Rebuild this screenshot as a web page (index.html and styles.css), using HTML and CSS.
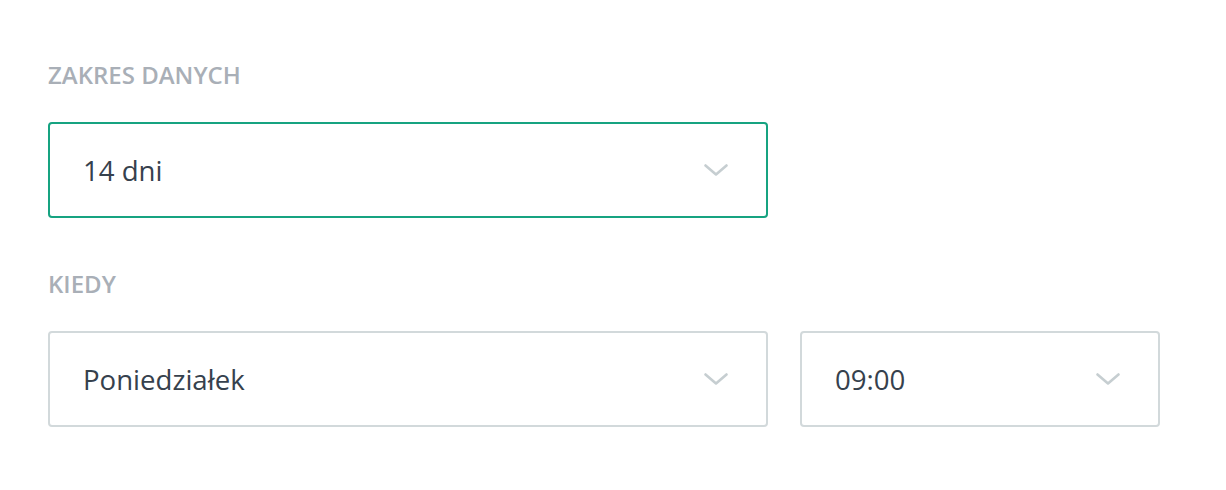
FILE: index.html
```html
<!DOCTYPE html>
<html lang="pl">
<head>
<meta charset="utf-8">
<link rel="stylesheet" href="styles.css">
</head>
<body>
<div class="form">
  <div class="field">
    <div class="label">Zakres danych</div>
    <div class="row">
      <div class="select wide active">
        <span class="value">14 dni</span>
        <svg class="chev" viewBox="0 0 24 12" width="24" height="12"><path d="M1.5 1.5 L12 10.5 L22.5 1.5" fill="none" stroke="#c6ced1" stroke-width="2.6" stroke-linecap="round" stroke-linejoin="round"/></svg>
      </div>
    </div>
  </div>
  <div class="field">
    <div class="label">Kiedy</div>
    <div class="row">
      <div class="select wide">
        <span class="value">Poniedziałek</span>
        <svg class="chev" viewBox="0 0 24 12" width="24" height="12"><path d="M1.5 1.5 L12 10.5 L22.5 1.5" fill="none" stroke="#c6ced1" stroke-width="2.6" stroke-linecap="round" stroke-linejoin="round"/></svg>
      </div>
      <div class="select narrow">
        <span class="value">09:00</span>
        <svg class="chev" viewBox="0 0 24 12" width="24" height="12"><path d="M1.5 1.5 L12 10.5 L22.5 1.5" fill="none" stroke="#c6ced1" stroke-width="2.6" stroke-linecap="round" stroke-linejoin="round"/></svg>
      </div>
    </div>
  </div>
</div>
</body>
</html>
```

FILE: styles.css
```css
html, body {
  margin: 0;
  padding: 0;
  background: #ffffff;
}
body {
  font-family: "Open Sans", "Noto Sans", sans-serif;
  color: #36414d;
}
.form {
  display: flex;
  flex-direction: column;
  gap: 51px;
  padding: 60px 0 0 48px;
}
.field {
  display: flex;
  flex-direction: column;
  gap: 32px;
}
.label {
  text-transform: uppercase;
  font-weight: 600;
  font-size: 24px;
  line-height: 30px;
  color: #a9afb7;
}
.row {
  display: flex;
  gap: 32px;
}
.select {
  box-sizing: border-box;
  height: 96px;
  border: 2px solid #d2d9db;
  border-radius: 4px;
  display: flex;
  align-items: center;
  justify-content: space-between;
  padding: 0 38px 0 33px;
}
.select.active {
  border-color: #16a381;
}
.wide { width: 720px; }
.narrow { width: 360px; }
.value {
  font-size: 27.6px;
  color: #36414d;
}
.chev {
  display: block;
}
```
